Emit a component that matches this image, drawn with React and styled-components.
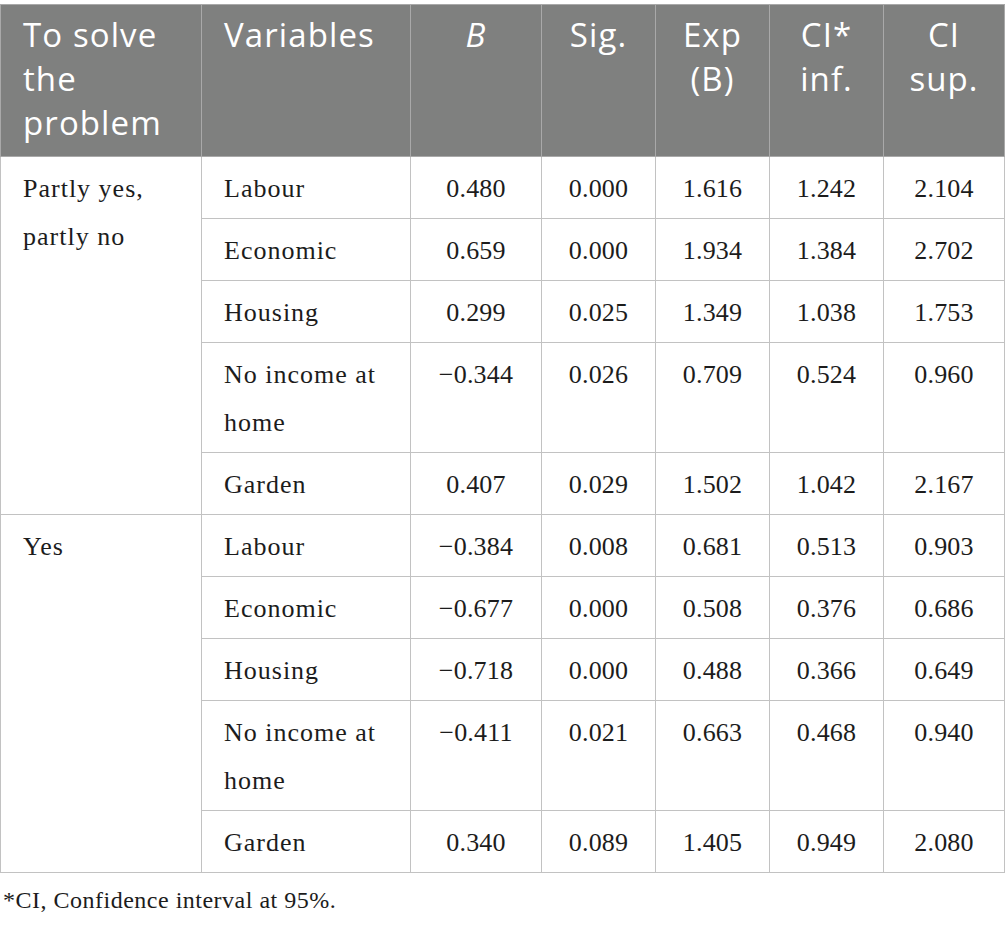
import styled, { createGlobalStyle } from 'styled-components';

const GlobalStyle = createGlobalStyle`
  body {
    margin: 0;
    background: #ffffff;
  }
`;

const COLUMN_WIDTHS = [201, 209, 131, 114, 114, 114, 121];

const Page = styled.div`
  padding-top: 4px;
  width: 1005px;
`;

const Table = styled.table`
  width: 1004px;
  table-layout: fixed;
  border-collapse: collapse;
  border: 1px solid #c2c2c2;
`;

const HeadCell = styled.th`
  background: #7f807f;
  color: #ffffff;
  font-family: 'Open Sans', 'Noto Sans', sans-serif;
  font-size: 33px;
  font-weight: 400;
  line-height: 44px;
  letter-spacing: 1.1px;
  text-align: ${(props) => (props.center ? 'center' : 'left')};
  vertical-align: top;
  padding: ${(props) => (props.center ? '8px 18px 10px' : '8px 22px 10px')};
  border: 1px solid #a9a9a9;
  height: 133px;
`;

const Cell = styled.td`
  font-family: 'Liberation Serif', 'Times New Roman', serif;
  font-size: 26px;
  line-height: 48px;
  color: #1c1c1c;
  text-align: ${(props) => (props.center ? 'center' : 'left')};
  letter-spacing: ${(props) => (props.center ? '0.2px' : '1px')};
  vertical-align: top;
  padding: ${(props) => (props.center ? '8px 8px 5px' : '8px 20px 5px 22px')};
  border: 1px solid #c2c2c2;
`;

const Footnote = styled.div`
  font-family: 'Liberation Serif', 'Times New Roman', serif;
  font-size: 24px;
  color: #1c1c1c;
  padding: 14px 0 0 3px;
  letter-spacing: 0.5px;
`;

const groups = [
  {
    label: 'Partly yes, partly no',
    rows: [
      ['Labour', '0.480', '0.000', '1.616', '1.242', '2.104'],
      ['Economic', '0.659', '0.000', '1.934', '1.384', '2.702'],
      ['Housing', '0.299', '0.025', '1.349', '1.038', '1.753'],
      ['No income at home', '\u22120.344', '0.026', '0.709', '0.524', '0.960'],
      ['Garden', '0.407', '0.029', '1.502', '1.042', '2.167'],
    ],
  },
  {
    label: 'Yes',
    rows: [
      ['Labour', '\u22120.384', '0.008', '0.681', '0.513', '0.903'],
      ['Economic', '\u22120.677', '0.000', '0.508', '0.376', '0.686'],
      ['Housing', '\u22120.718', '0.000', '0.488', '0.366', '0.649'],
      ['No income at home', '\u22120.411', '0.021', '0.663', '0.468', '0.940'],
      ['Garden', '0.340', '0.089', '1.405', '0.949', '2.080'],
    ],
  },
];

export default function App() {
  return (
    <Page>
      <GlobalStyle />
      <Table>
        <colgroup>
          {COLUMN_WIDTHS.map((w, i) => (
            <col key={i} style={{ width: w }} />
          ))}
        </colgroup>
        <thead>
          <tr>
            <HeadCell>To solve the problem</HeadCell>
            <HeadCell>Variables</HeadCell>
            <HeadCell center>
              <i>B</i>
            </HeadCell>
            <HeadCell center>Sig.</HeadCell>
            <HeadCell center>Exp (B)</HeadCell>
            <HeadCell center>CI* inf.</HeadCell>
            <HeadCell center>CI sup.</HeadCell>
          </tr>
        </thead>
        <tbody>
          {groups.map((group) =>
            group.rows.map((row, i) => (
              <tr key={`${group.label}-${i}`}>
                {i === 0 && <Cell rowSpan={group.rows.length}>{group.label}</Cell>}
                <Cell>{row[0]}</Cell>
                {row.slice(1).map((value, j) => (
                  <Cell center key={j}>
                    {value}
                  </Cell>
                ))}
              </tr>
            ))
          )}
        </tbody>
      </Table>
      <Footnote>*CI, Confidence interval at 95%.</Footnote>
    </Page>
  );
}
